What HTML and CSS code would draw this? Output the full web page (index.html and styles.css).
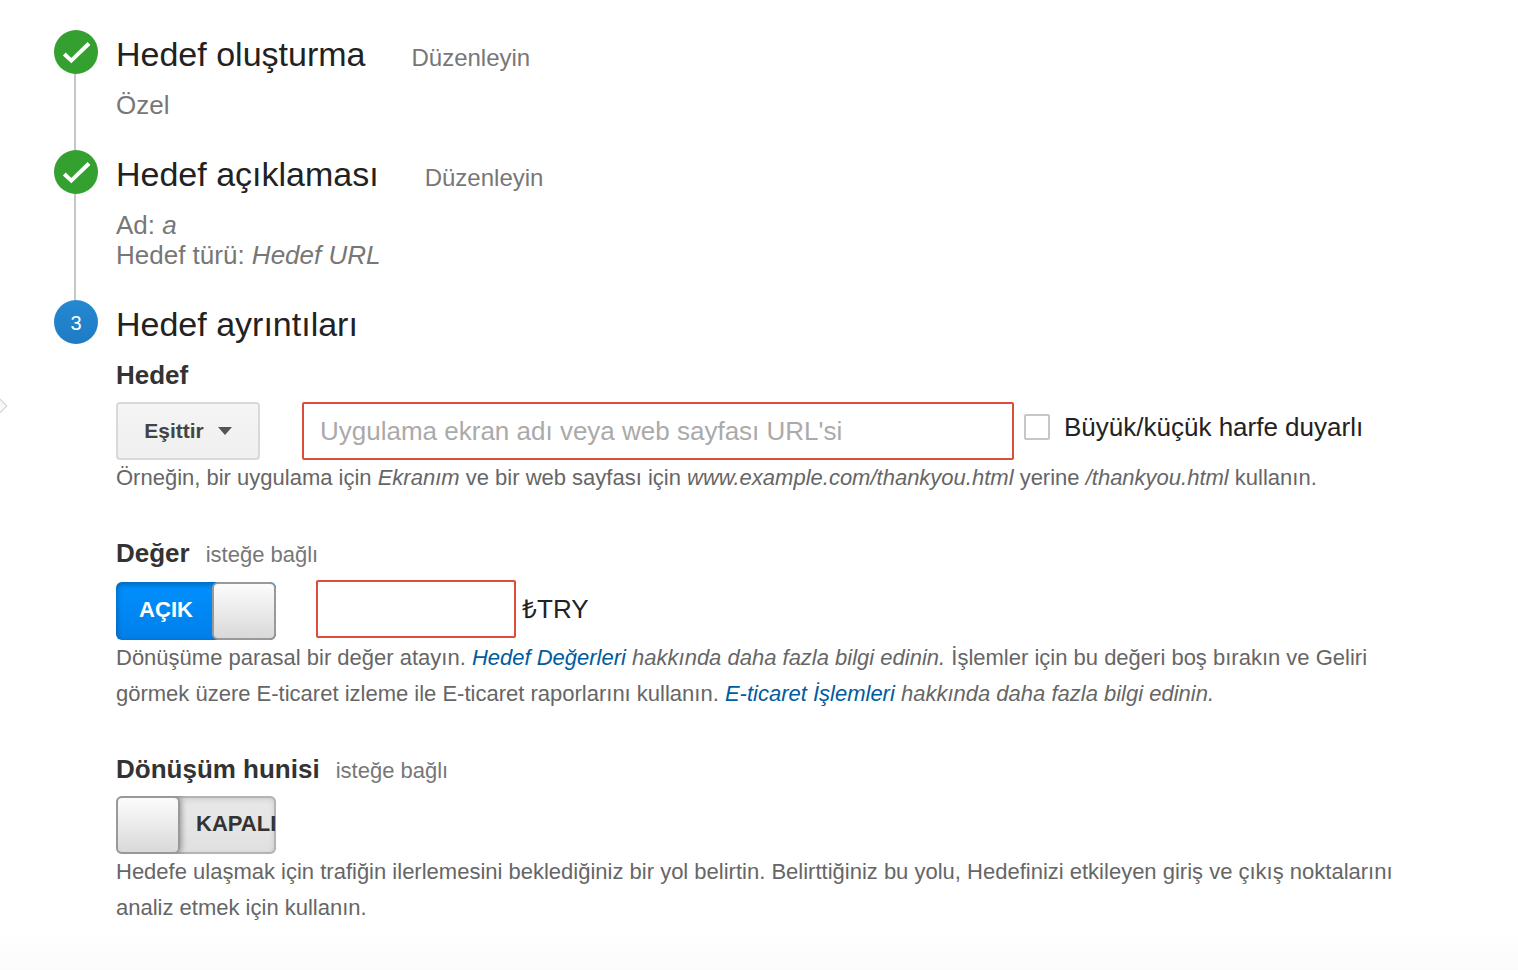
FILE: index.html
```html
<!DOCTYPE html>
<html lang="tr">

<head>
  <title>Hedef ayrıntıları</title>
  <meta charset="UTF-8">
  <meta name="viewport" content="width=device-width, initial-scale=1">
  <link rel="stylesheet" href="styles.css">
</head>

<body>

  <span class="panel-arrow"></span>

  <form class="wizard">

    <!-- Tamamlanan adımlar -->
    <section class="step">
      <div class="step-marker">
        <svg class="badge" viewBox="0 0 44 44" aria-hidden="true">
          <circle cx="22" cy="22" r="22" fill="#33a02f"/>
          <path d="M10.3 24L17.3 30.6L35 13.5" fill="none" stroke="#fff" stroke-width="4"/>
        </svg>
      </div>
      <div class="step-content">
        <div class="step-header">
          <h2>Hedef oluşturma</h2>
          <a href="#" class="edit">Düzenleyin</a>
        </div>
        <p class="summary">Özel</p>
      </div>
    </section>

    <section class="step">
      <div class="step-marker">
        <svg class="badge" viewBox="0 0 44 44" aria-hidden="true">
          <circle cx="22" cy="22" r="22" fill="#33a02f"/>
          <path d="M10.3 24L17.3 30.6L35 13.5" fill="none" stroke="#fff" stroke-width="4"/>
        </svg>
      </div>
      <div class="step-content">
        <div class="step-header">
          <h2>Hedef açıklaması</h2>
          <a href="#" class="edit">Düzenleyin</a>
        </div>
        <p class="summary">Ad: <em>a</em><br>Hedef türü: <em>Hedef URL</em></p>
      </div>
    </section>

    <!-- Etkin adım -->
    <section class="step active">
      <div class="step-marker">
        <span class="badge number">3</span>
      </div>
      <div class="step-content">
        <div class="step-header">
          <h2>Hedef ayrıntıları</h2>
        </div>

        <div class="field">
          <div class="field-header">
            <label class="field-label" for="hedef">Hedef</label>
          </div>
          <div class="field-row">
            <button type="button" class="match">Eşittir <span class="caret"></span></button>
            <input type="text" id="hedef" class="text-input url" placeholder="Uygulama ekran adı veya web sayfası URL'si">
            <label class="check"><input type="checkbox">Büyük/küçük harfe duyarlı</label>
          </div>
          <p class="help">Örneğin, bir uygulama için <em>Ekranım</em> ve bir web sayfası için <em>www.example.com/thankyou.html</em> yerine <em>/thankyou.html</em> kullanın.</p>
        </div>

        <div class="field">
          <div class="field-header">
            <label class="field-label" for="deger">Değer</label>
            <span class="optional">isteğe bağlı</span>
          </div>
          <div class="field-row value-row">
            <button type="button" class="toggle on" role="switch" aria-checked="true">
              <span class="toggle-text">AÇIK</span><span class="knob"></span>
            </button>
            <input type="text" id="deger" class="text-input amount">
            <span class="currency">₺TRY</span>
          </div>
          <p class="help">Dönüşüme parasal bir değer atayın. <em><a href="#">Hedef Değerleri</a> hakkında daha fazla bilgi edinin.</em> İşlemler için bu değeri boş bırakın ve Geliri görmek üzere E-ticaret izleme ile E-ticaret raporlarını kullanın. <em><a href="#">E-ticaret İşlemleri</a> hakkında daha fazla bilgi edinin.</em></p>
        </div>

        <div class="field">
          <div class="field-header">
            <label class="field-label" for="huni">Dönüşüm hunisi</label>
            <span class="optional">isteğe bağlı</span>
          </div>
          <div class="field-row">
            <button type="button" id="huni" class="toggle off" role="switch" aria-checked="false">
              <span class="knob"></span><span class="toggle-text">KAPALI</span>
            </button>
          </div>
          <p class="help">Hedefe ulaşmak için trafiğin ilerlemesini beklediğiniz bir yol belirtin. Belirttiğiniz bu yolu, Hedefinizi etkileyen giriş ve çıkış noktalarını analiz etmek için kullanın.</p>
        </div>
      </div>
    </section>

  </form>

</body>

</html>
```
FILE: styles.css
```css
* {
  box-sizing: border-box;
}

body {
  margin: 0;
  min-height: 100vh;
  font-family: "Liberation Sans", Arial, sans-serif;
  font-size: 26px;
  line-height: 30px;
  color: #222;
  background: linear-gradient(to top, #fbfbfb, #fff 40px);
}

h2, p {
  margin: 0;
}

a {
  color: #005c9c;
  text-decoration: none;
}

.wizard {
  padding: 30px 110px 40px 54px;
}

/* panel kenarındaki küçük ok */
.panel-arrow {
  position: absolute;
  top: 400px;
  left: -7px;
  width: 12px;
  height: 12px;
  border: 1px solid #d0d0d0;
  background: #f7f7f7;
  transform: rotate(45deg);
}

/* Adımlar */
.step {
  display: flex;
  gap: 18px;
}

.step-marker {
  display: flex;
  flex-direction: column;
  align-items: center;
  flex: 0 0 44px;
}

.step-marker::after {
  content: "";
  flex: 1;
  width: 2px;
  margin-right: 2px;
  background: #c6c6c6;
}

.step.active .step-marker::after {
  display: none;
}

.badge {
  display: block;
  width: 44px;
  height: 44px;
}

.number {
  border-radius: 50%;
  background: linear-gradient(#2389d2, #1f7bc4);
  color: #fff;
  font-size: 20px;
  line-height: 46px;
  text-align: center;
}

.step-content {
  flex: 1;
  min-width: 0;
  padding-bottom: 30px;
}

.step.active .step-content {
  padding-bottom: 0;
}

.step-header {
  display: flex;
  align-items: baseline;
  gap: 46px;
  margin-bottom: 12px;
}

h2 {
  font-size: 34px;
  font-weight: normal;
  line-height: 48px;
}

.edit {
  font-size: 24px;
  color: #777;
}

.summary {
  color: #777;
}

/* Alanlar */
.field + .field {
  margin-top: 42px;
}

.field-header {
  display: flex;
  align-items: baseline;
  gap: 16px;
  margin-bottom: 12px;
}

.field-label {
  font-weight: bold;
  color: #333;
}

.optional {
  font-size: 22px;
  line-height: 24px;
  color: #777;
}

.field-row {
  display: flex;
  align-items: center;
}

.help {
  font-size: 22px;
  line-height: 36px;
  color: #666;
}

.match {
  display: flex;
  align-items: center;
  justify-content: center;
  gap: 14px;
  width: 144px;
  height: 58px;
  margin-right: 42px;
  padding: 0;
  border: 2px solid #d9d9d9;
  border-radius: 4px;
  background: linear-gradient(#f5f5f5, #efefef);
  color: #444;
  font: bold 21px "Liberation Sans", Arial, sans-serif;
}

.caret {
  border: 7px solid transparent;
  border-top: 8px solid #555;
  border-bottom: 0;
}

.text-input {
  height: 58px;
  padding: 0 16px;
  border: 2px solid #dd4b39;
  border-radius: 2px;
  background: #fff;
  color: #222;
  font: 26px "Liberation Sans", Arial, sans-serif;
}

.text-input::placeholder {
  color: #aaa;
}

.url {
  flex: 0 1 712px;
  min-width: 0;
}

.amount {
  width: 200px;
  margin: 0 6px 0 40px;
}

.check {
  display: flex;
  align-items: center;
  gap: 14px;
  margin: 0 0 8px 10px;
  white-space: nowrap;
}

.check input {
  appearance: none;
  width: 26px;
  height: 26px;
  margin: 0;
  border: 2px solid #c6c6c6;
  border-radius: 2px;
  background: #fff;
}

.value-row {
  align-items: flex-start;
}

.value-row .toggle {
  margin-top: 2px;
}

.currency {
  line-height: 58px;
}

/* Açma / kapama düğmeleri */
.toggle {
  display: flex;
  width: 160px;
  height: 58px;
  padding: 0;
  border: 0;
  border-radius: 6px;
  overflow: hidden;
  font: bold 22px/56px "Liberation Sans", Arial, sans-serif;
}

.toggle-text {
  flex: 1;
  text-align: center;
}

.knob {
  flex: 0 0 64px;
  height: 58px;
  border: 2px solid #999;
  border-radius: 6px;
  background: linear-gradient(#fcfcfc, #d9d9d9);
}

.on {
  background: linear-gradient(#0090ff, #007fe9);
  box-shadow: inset 0 2px 6px rgba(0, 0, 0, 0.35);
  color: #fff;
}

.on .toggle-text {
  padding-left: 4px;
}

.off {
  background: linear-gradient(#e9e9e9, #e0e0e0);
  box-shadow: inset 0 0 0 2px #b4b4b4, inset 0 2px 6px 1px rgba(0, 0, 0, 0.15);
  color: #333;
}

.off .knob {
  box-shadow: 1px 0 6px rgba(0, 0, 0, 0.4);
}

.off .toggle-text {
  padding-left: 16px;
  text-align: left;
}
```
